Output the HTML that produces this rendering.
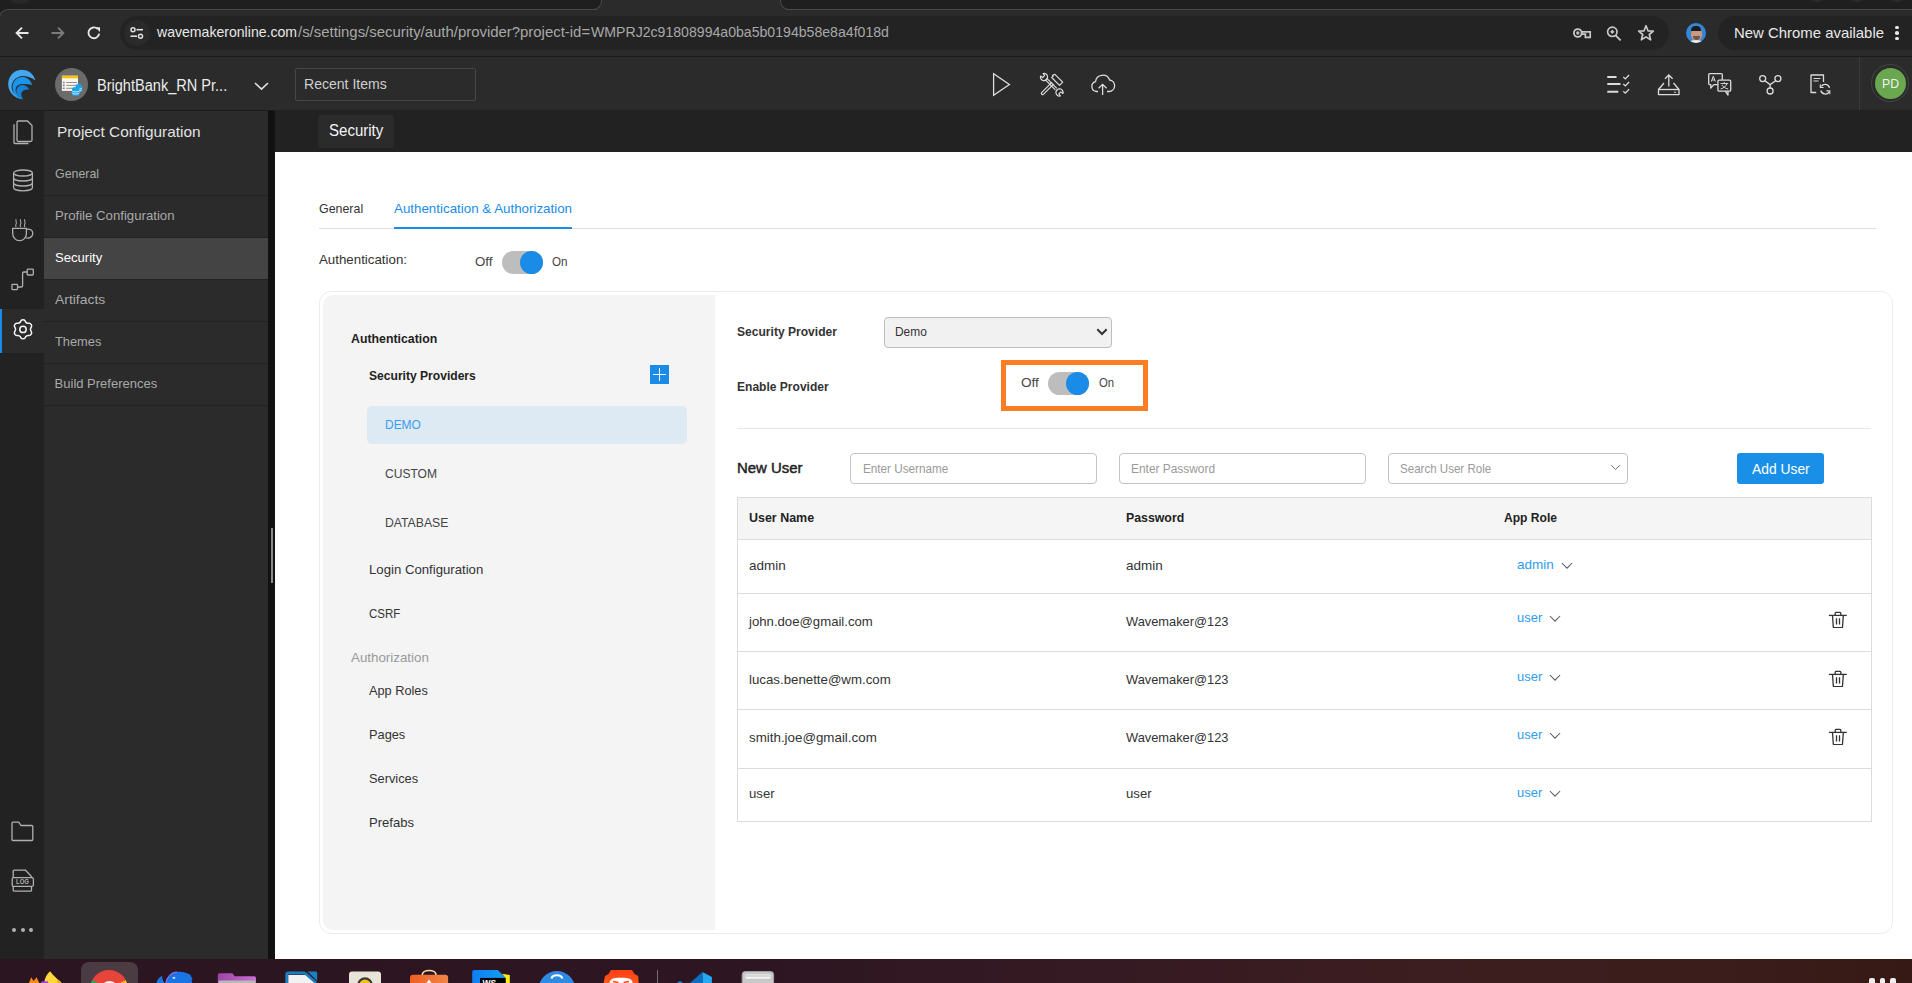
<!DOCTYPE html>
<html><head><meta charset="utf-8">
<style>
*{box-sizing:border-box;margin:0;padding:0}
html,body{width:1912px;height:983px;overflow:hidden;background:#fff;font-family:"Liberation Sans",sans-serif;position:relative}
.a{position:absolute}
.t{position:absolute;white-space:nowrap;transform-origin:0 0}
svg{display:block}
</style></head><body>
<div class="a" style="left:0px;top:0px;width:1912px;height:57px;background:#1f1f1f"></div>
<div class="a" style="left:0px;top:9px;width:1912px;height:48px;background:#2b2b2b"></div>
<div class="a" style="left:0px;top:9px;width:10px;height:10px;background:#1f1f1f"></div>
<div class="a" style="left:-1px;top:9px;width:603px;height:20px;border-top:1px solid #4a4a4a;border-left:1px solid #4a4a4a;border-top-left-radius:9px;background:#2b2b2b"></div>
<div class="a" style="left:780px;top:9px;width:1132px;height:1px;background:#4a4a4a"></div>
<div class="a" style="left:596px;top:0px;width:190px;height:10px;background:#2b2b2b"></div>
<div class="a" style="left:570px;top:0px;width:32px;height:10px;border-bottom-right-radius:9px;border-bottom:1px solid #4a4a4a;border-right:1px solid #4a4a4a;background:#1f1f1f"></div>
<div class="a" style="left:780px;top:0px;width:32px;height:10px;border-bottom-left-radius:9px;border-bottom:1px solid #4a4a4a;border-left:1px solid #4a4a4a;background:#1f1f1f"></div>
<div class="a" style="left:8px;top:-14px;width:24px;height:18px;border-radius:50%;background:#282828"></div>
<div class="a" style="left:0px;top:56px;width:1912px;height:1px;background:#1a1a1a"></div>
<div class="a" style="left:1807px;top:-18px;width:20px;height:20px;background:#2a2a2a;border-radius:50%"></div>
<div class="a" style="left:1847px;top:-18px;width:20px;height:20px;background:#2a2a2a;border-radius:50%"></div>
<div class="a" style="left:1887px;top:-18px;width:20px;height:20px;background:#2a2a2a;border-radius:50%"></div>
<svg class="a" style="left:14px;top:25px;" width="16" height="16" viewBox="0 0 16 16" fill="none"><path d="M14.5 8H2.8M8 2.6L2.6 8 8 13.4" stroke="#e6e6e6" stroke-width="1.9"/></svg>
<svg class="a" style="left:50px;top:25px;" width="16" height="16" viewBox="0 0 16 16" fill="none"><path d="M1.5 8H13.2M8 2.6L13.4 8 8 13.4" stroke="#7c7c7c" stroke-width="1.9"/></svg>
<svg class="a" style="left:86px;top:25px;" width="16" height="16" viewBox="0 0 16 16" fill="none"><path d="M13.2 8.6A5.4 5.4 0 1 1 11.6 3.9" stroke="#e6e6e6" stroke-width="1.9"/><path d="M9.2 2.2H14V7z" fill="#e6e6e6"/></svg>
<div class="a" style="left:120px;top:16px;width:1549px;height:34px;background:#232323;border-radius:17px"></div>
<div class="a" style="left:124px;top:20px;width:26px;height:26px;background:#2a2a2a;border-radius:50%"></div>
<svg class="a" style="left:127px;top:23px;" width="20" height="20" viewBox="0 0 20 20" fill="none"><circle cx="6" cy="6.7" r="2" stroke="#e0e0e0" stroke-width="1.5"/><path d="M9.5 6.7H16" stroke="#e0e0e0" stroke-width="1.6"/><circle cx="13.5" cy="13.2" r="2" stroke="#e0e0e0" stroke-width="1.5"/><path d="M3.5 13.2H10" stroke="#e0e0e0" stroke-width="1.6"/></svg>
<div class="t" id="t0" style="left:157.39px;top:24.40px;font-size:15px;line-height:15px;color:#e8e8e8;transform:scaleX(0.9384);">wavemakeronline.com</div>
<div class="t" id="t1" style="left:297.60px;top:24.40px;font-size:15px;line-height:15px;color:#a8a8a8;transform:scaleX(0.9939);">/s/settings/security/auth/provider?project-id=</div>
<div class="t" id="t2" style="left:590.80px;top:24.40px;font-size:15px;line-height:15px;color:#a8a8a8;transform:scaleX(0.9400);">WMPRJ2c91808994a0ba5b0194b58e8a4f018d</div>
<svg class="a" style="left:1570px;top:24px;" width="22" height="18" viewBox="0 0 22 18" fill="none"><circle cx="7.8" cy="9" r="3.9" stroke="#c8c8c8" stroke-width="1.8"/><circle cx="7.8" cy="9" r="1.7" fill="#bdbdbd"/><path d="M11.6 7.9H20.2V13.3H15.4V10.1H11.6" stroke="#c8c8c8" stroke-width="1.7"/></svg>
<svg class="a" style="left:1604px;top:24px;" width="20" height="20" viewBox="0 0 20 20" fill="none"><circle cx="8.3" cy="7.8" r="4.7" stroke="#c8c8c8" stroke-width="1.7"/><path d="M11.6 11.3L16.6 16.3" stroke="#c8c8c8" stroke-width="1.8"/><circle cx="8.3" cy="7.8" r="1.5" fill="#c8c8c8"/><path d="M8.3 5.8V9.8M6.3 7.8H10.3" stroke="#c8c8c8" stroke-width="1"/></svg>
<svg class="a" style="left:1636px;top:23px;" width="20" height="20" viewBox="0 0 20 20" fill="none"><path d="M10 2.8L12 7.8 17.3 8.1 13.3 11.5 14.6 16.8 10 13.9 5.4 16.8 6.7 11.5 2.7 8.1 8 7.8Z" stroke="#c8c8c8" stroke-width="1.7" stroke-linejoin="round"/></svg>
<div class="a" style="left:1686px;top:23px;width:20px;height:20px;border-radius:50%;background:#3486d8;overflow:hidden"><div class="a" style="left:4.5px;top:5px;width:11px;height:13px;border-radius:48%;background:#c99a7c"></div><div class="a" style="left:5px;top:2.5px;width:10px;height:5px;border-radius:5px 5px 1px 1px;background:#1d1b1d"></div><div class="a" style="left:6.5px;top:12.5px;width:7px;height:4px;border-radius:0 0 4px 4px;background:#4a3a34;opacity:.7"></div><div class="a" style="left:2px;top:17px;width:16px;height:6px;border-radius:50% 50% 0 0;background:#e9e9ee"></div></div>
<div class="a" style="left:1718px;top:16px;width:210px;height:34px;background:#232323;border-radius:17px"></div>
<div class="t" id="t3" style="left:1733.50px;top:24.70px;font-size:15px;line-height:15px;color:#e8e8e8;transform:scaleX(0.9940);">New Chrome available</div>
<div class="a" style="left:1895.2px;top:25.7px;width:3.6px;height:3.6px;border-radius:50%;background:#e8e8e8"></div>
<div class="a" style="left:1895.2px;top:31.2px;width:3.6px;height:3.6px;border-radius:50%;background:#e8e8e8"></div>
<div class="a" style="left:1895.2px;top:36.7px;width:3.6px;height:3.6px;border-radius:50%;background:#e8e8e8"></div>
<div class="a" style="left:0px;top:57px;width:1912px;height:53px;background:#2b2b2b"></div>
<svg class="a" style="left:4px;top:66px;" width="36" height="36" viewBox="0 0 36 36" fill="none"><path d="M31.5 14.5C29 6.5 23 3.8 17.5 3.8 9.5 4.2 4.2 10.5 4.2 18.5 4.2 26 10.5 32.5 18.8 33.2 12.5 31 7.6 26.5 7.6 21.3 7.6 15 12.5 10 18.5 10 23.5 10 27.5 11.5 31.5 14.5Z" fill="#44a8f0"/><path d="M28.2 19C26.5 13.5 22.5 11 18.3 11 12.5 11 8.6 15.5 8.6 21.5 8.6 27.5 13 32.5 18.8 33.2 14.5 31 11.6 27.5 11.6 24 11.6 20.2 14.5 18 18.5 18 22 18 25 18.3 28.2 19Z" fill="#1b95ea"/><path d="M25.2 23.5C23.6 20.5 21 19 18.5 19 14.5 19 12.4 22 12.4 25.6 12.4 29.5 15.2 32.6 19.2 33.2 17.6 31.2 17.1 29 17.3 27.5 17.6 25 20.6 23.3 25.2 23.5Z" fill="#1482d6"/></svg>
<div class="a" style="left:55.3px;top:67.9px;width:32.8px;height:32.8px;background:#6b6b6b;border-radius:50%"></div>
<svg class="a" style="left:54px;top:66px;" width="36" height="36" viewBox="0 0 36 36" fill="none"><rect x="7.9" y="9.7" width="16.1" height="15.2" fill="#f7f7f7"/><rect x="7.9" y="9.7" width="16.1" height="2.6" fill="#f8c400"/><path d="M12.2 16.5H23M12.2 19.4H23M12.2 22.3H23" stroke="#8f8272" stroke-width=".9"/><path d="M8.8 16.5H10.7M8.8 19.4H10.7M8.8 22.3H10.7" stroke="#8f8272" stroke-width="1.6"/><path d="M21.6 19.4A3.2 1.5 0 0 1 28 19.4V24.6A3.2 1.5 0 0 1 21.6 24.6Z" fill="#19a3e8"/><path d="M21.6 21.7A3.2 1.4 0 0 0 28 21.7M21.6 23.6A3.2 1.4 0 0 0 28 23.6" stroke="#fff" stroke-width=".7"/><path d="M18 22.5A3.65 1.6 0 0 1 25.3 22.5V28.3A3.65 1.6 0 0 1 18 28.3Z" fill="#19a3e8"/><path d="M18 24.5A3.65 1.5 0 0 0 25.3 24.5M18 26.6A3.65 1.5 0 0 0 25.3 26.6" stroke="#fff" stroke-width=".8"/></svg>
<div class="t" id="t4" style="left:97.20px;top:78.00px;font-size:16px;line-height:16px;color:#ececec;transform:scaleX(0.9092);">BrightBank_RN Pr...</div>
<svg class="a" style="left:253px;top:80px;" width="17" height="12" viewBox="0 0 17 12" fill="none"><path d="M2 3L8.5 9 15 3" stroke="#e0e0e0" stroke-width="1.7"/></svg>
<div class="a" style="left:295px;top:68px;width:181px;height:33px;border:1px solid #474747;border-radius:2px"></div>
<div class="t" id="t5" style="left:303.80px;top:75.50px;font-size:15px;line-height:15px;color:#cfcfcf;transform:scaleX(0.9367);">Recent Items</div>
<svg class="a" style="left:990px;top:72px;" width="24" height="25" viewBox="0 0 24 25" fill="none"><path d="M3.6 1.8V23.2L19.4 12.5Z" stroke="#dcdcdc" stroke-width="1.3" stroke-linejoin="miter"/></svg>
<svg class="a" style="left:1039px;top:72px;" width="26" height="25" viewBox="0 0 26 25" fill="none"><g stroke="#dcdcdc" stroke-width="1.2" stroke-linejoin="round"><path d="M2.6 20.6L13.1 10.1M4.4 22.4L14.9 11.9M2.6 20.6A1.3 1.3 0 0 0 4.4 22.4"/><path d="M23.7 10.1L20.5 13.3 12.7 5.5 14.2 4 13.5 3.3 15.9 2.3Z"/><path d="M7.6 6.2L17.8 16.4M6.2 7.6L16.4 17.8"/><path d="M1.5 4.1A3.6 3.6 0 1 0 4.1 1.5L5.6 3.6 3.6 5.6Z"/><path d="M24 21.4A3.6 3.6 0 1 0 21.4 24L19.9 21.9 21.9 19.9Z"/></g></svg>
<svg class="a" style="left:1090px;top:72px;" width="26" height="24" viewBox="0 0 26 24" fill="none"><path d="M8 19.5H6.5A5 5 0 0 1 5.5 9.7 7.3 7.3 0 0 1 19.6 8 5.8 5.8 0 0 1 19.5 19.5H17" stroke="#dcdcdc" stroke-width="1.3"/><path d="M12.6 23V12.5M8.6 16.2L12.6 12.3 16.6 16.2" stroke="#dcdcdc" stroke-width="1.3"/></svg>
<svg class="a" style="left:1605px;top:72px;" width="28" height="24" viewBox="0 0 28 24" fill="none"><path d="M2.3 5H11.5M2.3 11.9H15.5M2.3 19.8H13.3" stroke="#dcdcdc" stroke-width="2"/><path d="M18.3 5L20.3 6.9 24.1 3M18.3 12L20.3 13.9 24.1 10M18.3 19.3L20.3 21.2 24.1 17.3" stroke="#dcdcdc" stroke-width="1.3"/></svg>
<svg class="a" style="left:1656px;top:72px;" width="26" height="25" viewBox="0 0 26 25" fill="none"><path d="M12.8 14.5V3M9 6.8L12.8 3 16.6 6.8" stroke="#dcdcdc" stroke-width="1.3"/><path d="M8 11L2.5 17.5V22.6H23V17.5L17.5 11" stroke="#dcdcdc" stroke-width="1.3" stroke-linejoin="round"/><path d="M2.5 17.5H23" stroke="#dcdcdc" stroke-width="1.3"/><path d="M18 20.2H20" stroke="#dcdcdc" stroke-width="1.1"/></svg>
<svg class="a" style="left:1707px;top:72px;" width="26" height="25" viewBox="0 0 26 25" fill="none"><path d="M15.3 8V2.8A1.2 1.2 0 0 0 14.1 1.6H2.9A1.2 1.2 0 0 0 1.7 2.8V11.5A1.2 1.2 0 0 0 2.9 12.7H3.8V16.2L6.8 12.7H10.9" stroke="#dcdcdc" stroke-width="1.3" stroke-linejoin="round"/><path d="M4.3 9.6L6.3 4.2 8.3 9.6M5 8H7.6" stroke="#dcdcdc" stroke-width="1"/><rect x="10.9" y="8.1" width="12.8" height="11" rx="1.2" stroke="#dcdcdc" stroke-width="1.3"/><path d="M18.3 19.1L21 23.1V19.1" stroke="#dcdcdc" stroke-width="1.3" stroke-linejoin="round"/><path d="M13.5 11.6H21.2M17.3 10V11.6M20 11.6C19 14.2 16.5 16.3 13.6 17M14.8 13C16.3 15 18.5 16.5 21.2 17" stroke="#dcdcdc" stroke-width="1"/></svg>
<svg class="a" style="left:1758px;top:72px;" width="25" height="25" viewBox="0 0 25 25" fill="none"><circle cx="4.7" cy="6.6" r="3" stroke="#dcdcdc" stroke-width="1.3"/><circle cx="19.9" cy="6.6" r="3" stroke="#dcdcdc" stroke-width="1.3"/><circle cx="12.1" cy="19" r="3" stroke="#dcdcdc" stroke-width="1.3"/><path d="M6.9 8.8L12.1 12.6 17.7 8.8M12.1 12.6V16" stroke="#dcdcdc" stroke-width="1.3"/></svg>
<svg class="a" style="left:1808px;top:72px;" width="25" height="25" viewBox="0 0 25 25" fill="none"><path d="M8.2 20.5H3V3H15.5V10" stroke="#dcdcdc" stroke-width="1.3" stroke-linejoin="round"/><path d="M5.5 6.5H12.5M5.5 9H10.5" stroke="#dcdcdc" stroke-width="1.1"/><path d="M21.5 15.8A4.6 4.6 0 0 0 13.2 14.5M12.8 18.5A4.6 4.6 0 0 0 21.2 19.8" stroke="#dcdcdc" stroke-width="1.3"/><path d="M12.3 12.2V15.5H15.6M21.8 22.2V18.9H18.5" stroke="#dcdcdc" stroke-width="1.1"/></svg>
<div class="a" style="left:1859px;top:57px;width:1px;height:53px;background:#3a3a3a"></div>
<div class="a" style="left:1871px;top:64px;width:38px;height:38px;border:1px solid #444;border-radius:50%"></div>
<div class="a" style="left:1874.5px;top:67.5px;width:31px;height:31px;background:#69a84f;border-radius:50%"></div>
<div class="t" id="t6" style="left:1881.50px;top:77.70px;font-size:12.5px;line-height:12.5px;color:#f2f2f2;transform:scaleX(0.9770);">PD</div>
<div class="a" style="left:0px;top:110px;width:44px;height:849px;background:#222"></div>
<svg class="a" style="left:11px;top:119px;" width="24" height="26" viewBox="0 0 24 26" fill="none"><path d="M6 3.5A1.5 1.5 0 0 1 7.5 2H16.5L21 6.5V21A1.5 1.5 0 0 1 19.5 22.5H7.5A1.5 1.5 0 0 1 6 21Z" stroke="#b0b0b0" stroke-width="1.3"/><path d="M3 5.2V23.5A1 1 0 0 0 4 24.5H17.5" stroke="#b0b0b0" stroke-width="1.3"/></svg>
<svg class="a" style="left:11px;top:168px;" width="24" height="25" viewBox="0 0 24 25" fill="none"><ellipse cx="12" cy="5" rx="9.4" ry="3" stroke="#b0b0b0" stroke-width="1.3"/><path d="M2.6 5V19.8C2.6 21.5 6.8 22.8 12 22.8S21.4 21.5 21.4 19.8V5" stroke="#b0b0b0" stroke-width="1.3"/><path d="M2.6 10C2.6 11.7 6.8 13 12 13S21.4 11.7 21.4 10M2.6 15C2.6 16.7 6.8 18 12 18S21.4 16.7 21.4 15" stroke="#b0b0b0" stroke-width="1.3"/></svg>
<svg class="a" style="left:11px;top:217px;" width="24" height="26" viewBox="0 0 24 26" fill="none"><path d="M1.7 11.3H15.4V16.5A6.85 7.2 0 0 1 1.7 16.5Z" stroke="#b0b0b0" stroke-width="1.3"/><path d="M15.3 12.3C19.5 11.6 21.9 13.6 21.8 16.6 21.7 19.6 19 21.6 15.3 21" stroke="#b0b0b0" stroke-width="1.3"/><path d="M5.2 2.2C4 3.8 6.3 5.4 5.1 7 4.4 8 4.7 9.2 5.1 10M9.7 2.2C8.5 3.8 10.8 5.4 9.6 7 8.9 8 9.2 9.2 9.6 10M13.9 2.2C12.7 3.8 15 5.4 13.8 7 13.1 8 13.4 9.2 13.8 10" stroke="#b0b0b0" stroke-width="1.05"/></svg>
<svg class="a" style="left:10px;top:266px;" width="26" height="26" viewBox="0 0 26 26" fill="none"><rect x="17.2" y="3.1" width="6.1" height="5.9" rx=".8" stroke="#b0b0b0" stroke-width="1.3"/><rect x="1.95" y="18.35" width="5.6" height="5.2" rx=".8" stroke="#b0b0b0" stroke-width="1.3"/><path d="M7.6 21H11.3A1.3 1.3 0 0 0 12.6 19.7V7.3A1.3 1.3 0 0 1 13.9 6H17.2" stroke="#b0b0b0" stroke-width="1.3"/></svg>
<div class="a" style="left:0px;top:309px;width:44px;height:44px;background:#2b2b2b"></div>
<div class="a" style="left:0px;top:309px;width:2px;height:44px;background:#1a8ce8"></div>
<svg class="a" style="left:11px;top:318px;" width="24" height="24" viewBox="0 0 24 24" fill="none"><path d="M12 1.8C13.6 1.8 13.6 3.9 15 4.6 16.4 5.4 18.1 4.2 19 5.6 19.8 7 17.9 7.9 17.9 9.5 17.9 11.1 19.8 12 19 13.4" stroke="none"/><path d="M9.9 2.4C10.7 1 13.3 1 14.1 2.4L14.7 3.5C15.2 4.3 16.1 4.8 17 4.8H18.3C19.9 4.8 21.2 7 20.4 8.4L19.8 9.5C19.3 10.3 19.3 11.4 19.8 12.2L20.4 13.3C21.2 14.7 19.9 16.9 18.3 16.9H17C16.1 16.9 15.2 17.4 14.7 18.2L14.1 19.3C13.3 20.7 10.7 20.7 9.9 19.3L9.3 18.2C8.8 17.4 7.9 16.9 7 16.9H5.7C4.1 16.9 2.8 14.7 3.6 13.3L4.2 12.2C4.7 11.4 4.7 10.3 4.2 9.5L3.6 8.4C2.8 7 4.1 4.8 5.7 4.8H7C7.9 4.8 8.8 4.3 9.3 3.5Z" stroke="#f4f4f4" stroke-width="1.5" transform="translate(0 .5)"/><circle cx="12" cy="11.4" r="3.2" stroke="#f4f4f4" stroke-width="1.5"/></svg>
<svg class="a" style="left:10px;top:820px;" width="26" height="24" viewBox="0 0 26 24" fill="none"><path d="M2 20.5V3.2A1 1 0 0 1 3 2.2H8.8L11 5.5H21.8A1 1 0 0 1 22.8 6.5V19.5A1 1 0 0 1 21.8 20.5H3A1 1 0 0 1 2 19.5Z" stroke="#b0b0b0" stroke-width="1.3"/></svg>
<svg class="a" style="left:10px;top:867px;" width="26" height="26" viewBox="0 0 26 26" fill="none"><path d="M3.2 10.5V4.2A1 1 0 0 1 4.2 3.2H15.5L21.5 9.5V10.5M3.2 19.5V23.2A1 1 0 0 0 4.2 24.2H20.5A1 1 0 0 0 21.5 23.2V19.5" stroke="#b0b0b0" stroke-width="1.3"/><rect x="2.2" y="10.6" width="21.2" height="8.8" rx="1.5" stroke="#b0b0b0" stroke-width="1.3"/></svg>
<div class="t" id="t7" style="left:16.20px;top:878.30px;font-size:7.5px;line-height:7.5px;color:#b0b0b0;font-weight:700;transform:scaleX(0.7975);">LOG</div>
<div class="a" style="left:12.3px;top:927.9px;width:4px;height:4px;background:#b0b0b0;border-radius:50%"></div>
<div class="a" style="left:20.5px;top:927.9px;width:4px;height:4px;background:#b0b0b0;border-radius:50%"></div>
<div class="a" style="left:28.5px;top:927.9px;width:4px;height:4px;background:#b0b0b0;border-radius:50%"></div>
<div class="a" style="left:44px;top:110px;width:224px;height:849px;background:#2b2b2b"></div>
<div class="t" id="t8" style="left:57.10px;top:123.60px;font-size:15px;line-height:15px;color:#e2e2e2;transform:scaleX(1.0243);">Project Configuration</div>
<div class="a" style="left:44px;top:195px;width:224px;height:1px;background:#222"></div>
<div class="t" id="t9" style="left:54.60px;top:167.20px;font-size:13px;line-height:13px;color:#a9a9a9;transform:scaleX(0.9524);">General</div>
<div class="a" style="left:44px;top:237px;width:224px;height:1px;background:#222"></div>
<div class="t" id="t10" style="left:54.60px;top:209.20px;font-size:13px;line-height:13px;color:#a9a9a9;transform:scaleX(1.0144);">Profile Configuration</div>
<div class="a" style="left:44px;top:238px;width:224px;height:41px;background:#444"></div>
<div class="a" style="left:44px;top:279px;width:224px;height:1px;background:#222"></div>
<div class="t" id="t11" style="left:54.60px;top:251.20px;font-size:13px;line-height:13px;color:#ffffff;transform:scaleX(1.0064);">Security</div>
<div class="a" style="left:44px;top:321px;width:224px;height:1px;background:#222"></div>
<div class="t" id="t12" style="left:54.60px;top:293.20px;font-size:13px;line-height:13px;color:#a9a9a9;transform:scaleX(1.0702);">Artifacts</div>
<div class="a" style="left:44px;top:363px;width:224px;height:1px;background:#222"></div>
<div class="t" id="t13" style="left:54.60px;top:335.20px;font-size:13px;line-height:13px;color:#a9a9a9;transform:scaleX(0.9872);">Themes</div>
<div class="a" style="left:44px;top:405px;width:224px;height:1px;background:#222"></div>
<div class="t" id="t14" style="left:54.60px;top:377.20px;font-size:13px;line-height:13px;color:#a9a9a9;">Build Preferences</div>
<div class="a" style="left:268px;top:110px;width:7px;height:849px;background:#111"></div>
<div class="a" style="left:0px;top:110px;width:1912px;height:1px;background:#1c1c1c"></div>
<div class="a" style="left:271px;top:528px;width:2px;height:55px;background:#8a8a8a"></div>
<div class="a" style="left:275px;top:110px;width:1637px;height:42px;background:#222"></div>
<div class="a" style="left:318px;top:115px;width:76px;height:33px;background:#2b2b2b;border-radius:3px"></div>
<div class="t" id="t15" style="left:329.00px;top:123.10px;font-size:16px;line-height:16px;color:#f5f5f5;transform:scaleX(0.9394);">Security</div>
<div class="a" style="left:275px;top:152px;width:1637px;height:807px;background:#fff"></div>
<div class="t" id="t16" style="left:319.20px;top:201.60px;font-size:13px;line-height:13px;color:#333;transform:scaleX(0.9545);">General</div>
<div class="t" id="t17" style="left:394.00px;top:201.60px;font-size:13px;line-height:13px;color:#1a8ce8;transform:scaleX(1.0265);">Authentication &amp; Authorization</div>
<div class="a" style="left:319px;top:228px;width:1557px;height:1px;background:#dedede"></div>
<div class="a" style="left:394px;top:227px;width:178px;height:2px;background:#1a8ce8"></div>
<div class="t" id="t18" style="left:319.00px;top:252.70px;font-size:13px;line-height:13px;color:#333;transform:scaleX(1.0233);">Authentication:</div>
<div class="t" id="t19" style="left:474.90px;top:254.70px;font-size:13px;line-height:13px;color:#444;transform:scaleX(1.0233);">Off</div>
<div class="a" style="left:502px;top:251px;width:41px;height:23px;background:#bdbdbd;border-radius:12px"></div>
<div class="a" style="left:520px;top:251px;width:23px;height:23px;background:#1a8ce8;border-radius:50%"></div>
<div class="t" id="t20" style="left:552.40px;top:254.70px;font-size:13px;line-height:13px;color:#444;transform:scaleX(0.8902);">On</div>
<div class="a" style="left:319px;top:291px;width:1574px;height:643px;border:1px solid #ececec;border-radius:12px"></div>
<div class="a" style="left:323px;top:295px;width:392px;height:635px;background:#f4f4f4;border-radius:10px 0 0 10px"></div>
<div class="t" id="t21" style="left:351.00px;top:331.70px;font-size:13px;line-height:13px;color:#222;font-weight:700;transform:scaleX(0.9473);">Authentication</div>
<div class="t" id="t22" style="left:368.70px;top:369.40px;font-size:13px;line-height:13px;color:#222;font-weight:700;transform:scaleX(0.9295);">Security Providers</div>
<div class="a" style="left:650px;top:365px;width:19px;height:19px;background:#1a8ce8"></div>
<div class="a" style="left:659px;top:368px;width:1px;height:13px;background:#fff"></div>
<div class="a" style="left:653px;top:374px;width:13px;height:1px;background:#fff"></div>
<div class="a" style="left:367px;top:406px;width:320px;height:38px;background:#dde9f3;border-radius:5px"></div>
<div class="t" id="t23" style="left:385.40px;top:418.20px;font-size:13px;line-height:13px;color:#3a9ef0;transform:scaleX(0.9205);">DEMO</div>
<div class="t" id="t24" style="left:385.40px;top:467.30px;font-size:13px;line-height:13px;color:#444;transform:scaleX(0.9269);">CUSTOM</div>
<div class="t" id="t25" style="left:385.40px;top:516.10px;font-size:13px;line-height:13px;color:#444;transform:scaleX(0.9392);">DATABASE</div>
<div class="t" id="t26" style="left:368.70px;top:563.40px;font-size:13px;line-height:13px;color:#333;transform:scaleX(1.0133);">Login Configuration</div>
<div class="t" id="t27" style="left:368.70px;top:606.80px;font-size:13px;line-height:13px;color:#333;transform:scaleX(0.8842);">CSRF</div>
<div class="t" id="t28" style="left:351.00px;top:650.60px;font-size:13px;line-height:13px;color:#999;transform:scaleX(1.0264);">Authorization</div>
<div class="t" id="t29" style="left:368.80px;top:684.20px;font-size:13px;line-height:13px;color:#333;transform:scaleX(0.9800);">App Roles</div>
<div class="t" id="t30" style="left:368.80px;top:727.80px;font-size:13px;line-height:13px;color:#333;transform:scaleX(0.9837);">Pages</div>
<div class="t" id="t31" style="left:368.80px;top:771.50px;font-size:13px;line-height:13px;color:#333;transform:scaleX(0.9839);">Services</div>
<div class="t" id="t32" style="left:368.80px;top:815.80px;font-size:13px;line-height:13px;color:#333;transform:scaleX(1.0045);">Prefabs</div>
<div class="t" id="t33" style="left:736.90px;top:325.30px;font-size:13px;line-height:13px;color:#333;font-weight:700;transform:scaleX(0.9285);">Security Provider</div>
<div class="a" style="left:884px;top:317px;width:228px;height:31px;background:#f1f1f1;border:1px solid #bdbdbd;border-radius:4px"></div>
<div class="t" id="t34" style="left:895.30px;top:325.10px;font-size:13px;line-height:13px;color:#333;transform:scaleX(0.9164);">Demo</div>
<svg class="a" style="left:1095px;top:327px;" width="14" height="10" viewBox="0 0 14 10" fill="none"><path d="M2.3 2.3L7 7 11.7 2.3" stroke="#333" stroke-width="2"/></svg>
<div class="t" id="t35" style="left:736.90px;top:379.70px;font-size:13px;line-height:13px;color:#333;font-weight:700;transform:scaleX(0.9263);">Enable Provider</div>
<div class="a" style="left:1001px;top:360px;width:147px;height:51px;border:5px solid #fb7d24"></div>
<div class="t" id="t36" style="left:1020.50px;top:375.50px;font-size:13px;line-height:13px;color:#444;transform:scaleX(1.0465);">Off</div>
<div class="a" style="left:1048px;top:372px;width:41px;height:23px;background:#bdbdbd;border-radius:12px"></div>
<div class="a" style="left:1066px;top:372px;width:23px;height:23px;background:#1a8ce8;border-radius:50%"></div>
<div class="t" id="t37" style="left:1098.60px;top:375.50px;font-size:13px;line-height:13px;color:#444;transform:scaleX(0.8728);">On</div>
<div class="a" style="left:737px;top:428px;width:1134px;height:1px;background:#e6e6e6"></div>
<div class="t" id="t38" style="left:736.90px;top:460.20px;font-size:15.5px;line-height:15.5px;color:#222;transform:scaleX(0.9618);-webkit-text-stroke:0.45px #222;">New User</div>
<div class="a" style="left:850px;top:453px;width:247px;height:31px;border:1px solid #c4c4c4;border-radius:4px"></div>
<div class="t" id="t39" style="left:862.50px;top:462.20px;font-size:13px;line-height:13px;color:#9a9a9a;transform:scaleX(0.9007);">Enter Username</div>
<div class="a" style="left:1119px;top:453px;width:247px;height:31px;border:1px solid #c4c4c4;border-radius:4px"></div>
<div class="t" id="t40" style="left:1131.40px;top:462.20px;font-size:13px;line-height:13px;color:#9a9a9a;transform:scaleX(0.9161);">Enter Password</div>
<div class="a" style="left:1388px;top:453px;width:240px;height:31px;border:1px solid #c4c4c4;border-radius:4px"></div>
<div class="t" id="t41" style="left:1400.00px;top:462.20px;font-size:13px;line-height:13px;color:#9a9a9a;transform:scaleX(0.8889);">Search User Role</div>
<svg class="a" style="left:1609px;top:463px;" width="12" height="8" viewBox="0 0 12 8" fill="none"><path d="M2.2 2.2L6.5 6.5 10.8 2.2" stroke="#707070" stroke-width="1"/></svg>
<div class="a" style="left:1737px;top:453px;width:87px;height:31px;background:#1a8fe8;border-radius:3px"></div>
<div class="t" id="t42" style="left:1751.50px;top:460.60px;font-size:15px;line-height:15px;color:#fff;transform:scaleX(0.9232);">Add User</div>
<div class="a" style="left:737px;top:497px;width:1135px;height:325px;border:1px solid #dcdcdc"></div>
<div class="a" style="left:738px;top:498px;width:1133px;height:41px;background:#f5f5f5"></div>
<div class="a" style="left:738px;top:539px;width:1133px;height:1px;background:#dcdcdc"></div>
<div class="t" id="t43" style="left:748.50px;top:510.70px;font-size:13px;line-height:13px;color:#222;font-weight:700;transform:scaleX(0.9588);">User Name</div>
<div class="t" id="t44" style="left:1126.40px;top:510.70px;font-size:13px;line-height:13px;color:#222;font-weight:700;transform:scaleX(0.9479);">Password</div>
<div class="t" id="t45" style="left:1503.80px;top:510.70px;font-size:13px;line-height:13px;color:#222;font-weight:700;transform:scaleX(0.9299);">App Role</div>
<div class="a" style="left:738px;top:593px;width:1133px;height:1px;background:#dcdcdc"></div>
<div class="a" style="left:738px;top:651px;width:1133px;height:1px;background:#dcdcdc"></div>
<div class="a" style="left:738px;top:709px;width:1133px;height:1px;background:#dcdcdc"></div>
<div class="a" style="left:738px;top:768px;width:1133px;height:1px;background:#dcdcdc"></div>
<div class="t" id="t46" style="left:748.50px;top:558.70px;font-size:13px;line-height:13px;color:#333;transform:scaleX(1.0367);">admin</div>
<div class="t" id="t47" style="left:1125.80px;top:558.70px;font-size:13px;line-height:13px;color:#333;transform:scaleX(1.0367);">admin</div>
<div class="t" id="t48" style="left:1517.20px;top:558.10px;font-size:13px;line-height:13px;color:#2d9cf0;transform:scaleX(1.0395);">admin</div>
<svg class="a" style="left:1561px;top:562px;" width="12" height="9" viewBox="0 0 12 9" fill="none"><path d="M0.9 1.0L6 6.2 11.1 1.0" stroke="#5a5a5a" stroke-width="1.05"/></svg>
<div class="t" id="t49" style="left:748.90px;top:615.00px;font-size:13px;line-height:13px;color:#333;transform:scaleX(1.0122);">john.doe@gmail.com</div>
<div class="t" id="t50" style="left:1125.80px;top:615.00px;font-size:13px;line-height:13px;color:#333;transform:scaleX(0.9875);">Wavemaker@123</div>
<div class="t" id="t51" style="left:1517.20px;top:611.10px;font-size:13px;line-height:13px;color:#2d9cf0;transform:scaleX(0.9960);">user</div>
<svg class="a" style="left:1549px;top:615px;" width="12" height="9" viewBox="0 0 12 9" fill="none"><path d="M0.9 1.0L6 6.2 11.1 1.0" stroke="#5a5a5a" stroke-width="1.05"/></svg>
<svg class="a" style="left:1828px;top:610px;" width="20" height="18" viewBox="0 0 20 18" fill="none"><path d="M0.9 5.4H18.8" stroke="#333" stroke-width="1.3"/><path d="M7.2 5.2V3.2A1 1 0 0 1 8.2 2.4H11.8A1 1 0 0 1 12.8 3.2V5.2" stroke="#333" stroke-width="1.3"/><path d="M4.5 5.6L5.3 17A.8.8 0 0 0 6.1 17.6H13.7A.8.8 0 0 0 14.5 17L15.3 5.6" stroke="#333" stroke-width="1.3"/><path d="M8.5 8.2V14.5M11.5 8.2V14.5" stroke="#333" stroke-width="1.3"/></svg>
<div class="t" id="t52" style="left:748.50px;top:672.70px;font-size:13px;line-height:13px;color:#333;transform:scaleX(1.0202);">lucas.benette@wm.com</div>
<div class="t" id="t53" style="left:1125.80px;top:672.70px;font-size:13px;line-height:13px;color:#333;transform:scaleX(0.9875);">Wavemaker@123</div>
<div class="t" id="t54" style="left:1517.20px;top:670.10px;font-size:13px;line-height:13px;color:#2d9cf0;transform:scaleX(0.9960);">user</div>
<svg class="a" style="left:1549px;top:674px;" width="12" height="9" viewBox="0 0 12 9" fill="none"><path d="M0.9 1.0L6 6.2 11.1 1.0" stroke="#5a5a5a" stroke-width="1.05"/></svg>
<svg class="a" style="left:1828px;top:669px;" width="20" height="18" viewBox="0 0 20 18" fill="none"><path d="M0.9 5.4H18.8" stroke="#333" stroke-width="1.3"/><path d="M7.2 5.2V3.2A1 1 0 0 1 8.2 2.4H11.8A1 1 0 0 1 12.8 3.2V5.2" stroke="#333" stroke-width="1.3"/><path d="M4.5 5.6L5.3 17A.8.8 0 0 0 6.1 17.6H13.7A.8.8 0 0 0 14.5 17L15.3 5.6" stroke="#333" stroke-width="1.3"/><path d="M8.5 8.2V14.5M11.5 8.2V14.5" stroke="#333" stroke-width="1.3"/></svg>
<div class="t" id="t55" style="left:748.50px;top:730.70px;font-size:13px;line-height:13px;color:#333;transform:scaleX(1.0265);">smith.joe@gmail.com</div>
<div class="t" id="t56" style="left:1125.80px;top:730.70px;font-size:13px;line-height:13px;color:#333;transform:scaleX(0.9875);">Wavemaker@123</div>
<div class="t" id="t57" style="left:1517.20px;top:727.70px;font-size:13px;line-height:13px;color:#2d9cf0;transform:scaleX(0.9960);">user</div>
<svg class="a" style="left:1549px;top:732px;" width="12" height="9" viewBox="0 0 12 9" fill="none"><path d="M0.9 1.0L6 6.2 11.1 1.0" stroke="#5a5a5a" stroke-width="1.05"/></svg>
<svg class="a" style="left:1828px;top:727px;" width="20" height="18" viewBox="0 0 20 18" fill="none"><path d="M0.9 5.4H18.8" stroke="#333" stroke-width="1.3"/><path d="M7.2 5.2V3.2A1 1 0 0 1 8.2 2.4H11.8A1 1 0 0 1 12.8 3.2V5.2" stroke="#333" stroke-width="1.3"/><path d="M4.5 5.6L5.3 17A.8.8 0 0 0 6.1 17.6H13.7A.8.8 0 0 0 14.5 17L15.3 5.6" stroke="#333" stroke-width="1.3"/><path d="M8.5 8.2V14.5M11.5 8.2V14.5" stroke="#333" stroke-width="1.3"/></svg>
<div class="t" id="t58" style="left:748.50px;top:786.70px;font-size:13px;line-height:13px;color:#333;transform:scaleX(1.0119);">user</div>
<div class="t" id="t59" style="left:1125.80px;top:786.70px;font-size:13px;line-height:13px;color:#333;transform:scaleX(1.0119);">user</div>
<div class="t" id="t60" style="left:1517.20px;top:785.80px;font-size:13px;line-height:13px;color:#2d9cf0;transform:scaleX(0.9960);">user</div>
<svg class="a" style="left:1549px;top:790px;" width="12" height="9" viewBox="0 0 12 9" fill="none"><path d="M0.9 1.0L6 6.2 11.1 1.0" stroke="#5a5a5a" stroke-width="1.05"/></svg>
<div class="a" style="left:0px;top:959px;width:1912px;height:24px;background:linear-gradient(90deg,#2b1520 0%,#2d1622 40%,#361a23 58%,#3d1e1f 78%,#3b1d1b 90%,#361915 100%)"></div>
<div class="a" style="left:80.5px;top:962px;width:57px;height:30px;background:#4b3b43;border-radius:8px"></div>
<div class="a" style="left:89.7px;top:970.2px;width:38.6px;height:38.6px;border-radius:50%;background:conic-gradient(from -60deg,#e8453a 0 120deg,#fbbd1a 120deg 240deg,#32a852 240deg 360deg)"></div>
<div class="a" style="left:100.5px;top:981px;width:17px;height:17px;border-radius:50%;background:#4a8af4;border:3.5px solid #f4f4f4"></div>
<svg class="a" style="left:0px;top:958px;" width="1912" height="25" viewBox="0 958 1912 25" fill="none">
<defs>
<linearGradient id="gfile" x1="0" x2="1"><stop offset="0" stop-color="#9c45a6"/><stop offset="1" stop-color="#c96fd1"/></linearGradient>
<linearGradient id="gbag" x1="0" x2="1"><stop offset="0" stop-color="#ef5f22"/><stop offset="1" stop-color="#f28548"/></linearGradient>
<linearGradient id="gws" x1="0" x2="1"><stop offset="0" stop-color="#0f7cf2"/><stop offset="1" stop-color="#14a0f0"/></linearGradient>
<linearGradient id="gbr" x1="0" y1="0" x2="0" y2="1"><stop offset="0" stop-color="#ff3b14"/><stop offset="1" stop-color="#ff5a1e"/></linearGradient>
</defs>
<!-- firefox -->
<path d="M29 983L31.2 977.3 33.6 981 36.6 977.2 39.3 983Z" fill="#ff8a1c"/>
<path d="M44.2 983C44.5 978 47 974 50.1 971.2 53 975 57 979 61.6 983Z" fill="#ffd93a"/>
<path d="M57 979L60 981 61.6 983H57Z" fill="#f3b41a"/>
<rect x="41.2" y="981.3" width="7" height="2" rx="1" fill="#a83fe0"/>
<!-- thunderbird -->
<path d="M156.5 983C157 979.5 159 977 162.2 975.9 162 978.5 163 981 164.4 983Z" fill="#1b78e0"/>
<path d="M165.5 983C166.5 976.5 171.5 971.8 179 971.7 184.5 971.7 188.5 973.5 191 975.5 189.8 975.6 192.3 977.5 192.5 979 191 979 192 981 192.3 983Z" fill="#1a74e6"/>
<path d="M166 983C167 977 171 972.5 177 972" stroke="#7b6ae8" stroke-width="1.5" fill="none"/>
<ellipse cx="174" cy="977.8" rx="1.4" ry=".9" fill="#eaf2ff"/>
<!-- files -->
<path d="M217.8 983V975A1.8 1.8 0 0 1 219.6 973.2H232.5L234.5 976.3H254.2A1.8 1.8 0 0 1 256 978.1V983Z" fill="url(#gfile)"/>
<rect x="218.5" y="980.5" width="37" height="3" rx="1" fill="#b9b9b9"/>
<!-- libreoffice -->
<path d="M286.8 983V974.6A1.6 1.6 0 0 1 288.4 973H305" stroke="#1b7fc2" stroke-width="3" fill="none"/>
<path d="M288.3 983V975H305.5L316 983Z" fill="#f2f2f2"/>
<path d="M307.5 971.6H315.6A1.6 1.6 0 0 1 317.2 973.2V981Z" fill="#1b7fc2"/>
<path d="M305 973L316.2 983" stroke="#1b7fc2" stroke-width="2.6"/>
<!-- cheese -->
<rect x="349" y="971.6" width="32" height="16" rx="3" fill="#e9e4d8"/>
<circle cx="365" cy="985" r="6.6" fill="#f0c419" stroke="#3a3838" stroke-width="2.2"/>
<!-- bag -->
<path d="M422.3 975.5V974.5A6.9 4.5 0 0 1 436 974.5V975.5" stroke="#f3d9b0" stroke-width="1.6" fill="none"/>
<rect x="410" y="974.7" width="38.1" height="12" rx="3" fill="url(#gbag)"/>
<path d="M426.5 983L429 979.5 431.5 983Z" fill="#fff"/>
<!-- webstorm -->
<path d="M472.2 983V972A2 2 0 0 1 474.2 970H497.8L505.6 978V983Z" fill="url(#gws)"/>
<path d="M502 973.7L509.8 975V983H505.6V978Z" fill="#f4ed1a"/>
<rect x="480" y="977.9" width="25.6" height="6" fill="#000"/>
<text x="482.5" y="986.2" font-family="Liberation Sans" font-weight="700" font-size="8.5" fill="#fff">WS</text>
<!-- blue circle -->
<circle cx="556.9" cy="989.5" r="18.4" fill="#2f8ae4"/>
<path d="M551.5 978.5A5.5 4 0 0 1 562.3 978.5" stroke="#fff" stroke-width="2.2" fill="none"/>
<!-- brave -->
<path d="M603.6 983L605 976 608.5 974 611 970H632L634.5 974 638.2 976 638.6 983Z" fill="url(#gbr)"/>
<path d="M609.5 983C610 979 613 977.8 621 977.8 629 977.8 632 979 632.7 983Z" fill="#fff"/>
<path d="M613 981.5L618.5 982.6M629 981.5L623.5 982.6" stroke="#ff4a1a" stroke-width="1.6"/>
<!-- separator -->
<rect x="657" y="970" width="1" height="13" fill="#7a6a75"/>
<!-- vscode -->
<path d="M702.4 972.1L711.9 977V983H702.4Z" fill="#24a9f2"/>
<path d="M702.4 972.1V983H690Z" fill="#0a6fc0"/>
<path d="M677 983L680 981 683 983Z" fill="#1c8ad6"/>
<!-- gray box -->
<rect x="742.2" y="971.6" width="31.4" height="16" rx="3" fill="#c9c9c9" stroke="#a3a3a3" stroke-width="1"/>
<rect x="745.5" y="974.6" width="25" height="4.2" rx="1.2" fill="#f4f4f4"/>
<path d="M746 976H770" stroke="#9a9a9a" stroke-width=".6"/>
</svg>
<div class="a" style="left:1869px;top:978px;width:5.5px;height:8px;background:#eee;border-radius:2px"></div>
<div class="a" style="left:1879.5px;top:978px;width:5.5px;height:8px;background:#eee;border-radius:2px"></div>
<div class="a" style="left:1890px;top:978px;width:5.5px;height:8px;background:#eee;border-radius:2px"></div>
</body></html>
